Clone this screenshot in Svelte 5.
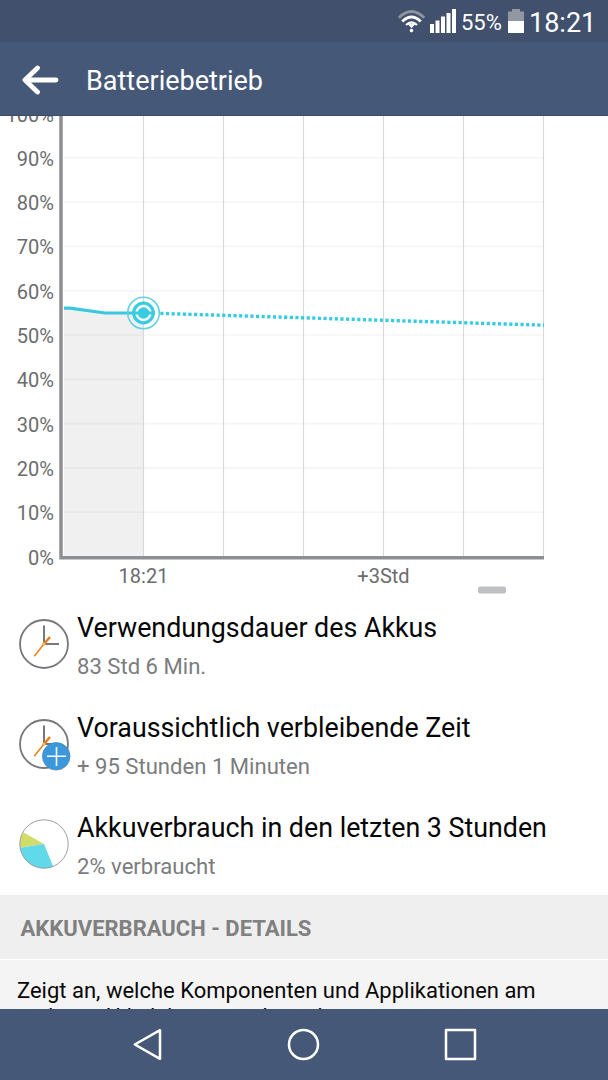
<script>
  const levels = [100, 90, 80, 70, 60, 50, 40, 30, 20, 10, 0];
  const columns = [143.5, 223.5, 303.5, 383.5, 463.5, 543.5];
  const gridY = (level) => 440.5 - level * 4.43;
  const items = [
    { icon: 'clock', title: 'Verwendungsdauer des Akkus', value: '83 Std 6 Min.' },
    { icon: 'plus', title: 'Voraussichtlich verbleibende Zeit', value: '+ 95 Stunden 1 Minuten' },
    { icon: 'pie', title: 'Akkuverbrauch in den letzten 3 Stunden', value: '2% verbraucht' }
  ];
</script>

<div class="screen">
  <div class="status">
    <svg class="wifi" width="28" height="24" viewBox="0 0 28 24" fill="none" stroke="#fff">
      <path d="M.8 8.8Q13.5 -3.6 26.2 8.8" stroke="#8e959f" stroke-width="2.8" />
      <path d="M4.2 12.6Q13.5 3.6 22.8 12.6" stroke-width="2.8" />
      <path d="M8 16Q13.5 10.8 19 16" stroke-width="2.2" />
      <path d="M8.8 14h3.6l1.1 1.4 1.1-1.4h3.6L13.5 19.2z" fill="#fff" stroke="none" />
      <circle cx="13.5" cy="21.6" r="1.8" fill="#fff" stroke="none" />
    </svg>
    <svg class="signal" width="26" height="24" viewBox="0 0 26 24" fill="#fff">
      <path d="M0 15h4v9H0zM5.5 11.5h4V24h-4zM11 7.5h4V24h-4zM16.5 4h4v20h-4zM22 0h4v24h-4z" />
    </svg>
    <span class="percent">55%</span>
    <svg class="battery" width="16" height="24" viewBox="0 0 16 24">
      <path d="M4 0h8v2.5h4V13H0V2.5h4z" fill="#9298a1" />
      <path d="M0 12h16v12H0z" fill="#fff" />
    </svg>
    <span class="time">18:21</span>
  </div>

  <header>
    <svg width="38" height="30" viewBox="0 0 38 30" fill="none" stroke="#fff" stroke-width="4.8" stroke-linecap="round" stroke-linejoin="round">
      <path d="M4 15H34M15.5 3L3 15L15.5 27" />
    </svg>
    <h1>Batteriebetrieb</h1>
  </header>

  <main>
    <svg class="chart" width="608" height="480" viewBox="0 0 608 480">
      <path d="M64 192.2L70 192.2L105 197H143.5V440H64z" fill="#f0f0f0" />
      {#each levels as level}
        {#if level > 0 && level < 100}
          <path d="M64 {gridY(level)}H543" stroke="#000" stroke-opacity="0.04" stroke-width="1.6" />
        {/if}
        <text class="level" x="54" y={gridY(level) + 8} text-anchor="end">{level}%</text>
      {/each}
      {#each columns as x}
        <path d="M{x} 0V440" stroke="#d8d8d9" stroke-width="1.1" />
      {/each}
      <path d="M61 0V441.8H544" fill="none" stroke="#8e8f92" stroke-width="3.5" />
      <path d="M64 192.2L70 192.2L105 197H143.5" fill="none" stroke="#39c8de" stroke-width="3.2" />
      <path d="M160.3 197.4L544 209.2" fill="none" stroke="#35cce0" stroke-width="3.4" stroke-dasharray="3.2 2.43" />
      <g fill="none" stroke="#39cbe1">
        <circle cx="143.5" cy="197" r="15.8" stroke-width="1.6" stroke="#62d2e3" />
        <circle cx="143.5" cy="197" r="9.8" fill="#fff" stroke-width="3.2" />
        <circle cx="143.5" cy="197" r="5.8" fill="#39cbe1" stroke="none" />
        <path d="M132 197h23" stroke-width="3" />
      </g>
      <text class="level" x="143.5" y="467" text-anchor="middle">18:21</text>
      <text class="level" x="383.5" y="467" text-anchor="middle">+3Std</text>
      <rect x="478" y="470.5" width="28" height="7" rx="2" fill="#bfc0c3" />
    </svg>

    <div class="items">
      {#each items as item}
        <section class="item">
          <svg class="icon" width="52" height="54" viewBox="0 0 52 54" fill="none">
            {#if item.icon === 'pie'}
              <circle cx="25" cy="26" r="24" fill="#fff" />
              <path d="M25 26L4.4 14.2A24 24 0 0 0 1.2 29.8z" fill="#d3dc69" />
              <path d="M25 26L1.2 29.8A24 24 0 0 0 34.2 48.4z" fill="#60d9eb" />
              <circle cx="25" cy="26" r="24.2" stroke="#929394" stroke-width="0.9" />
            {:else}
              <circle cx="25" cy="26" r="24" stroke="#77787a" stroke-width="1.8" />
              <path d="M25 7.5V26H40" stroke="#77787a" stroke-width="2" />
              <path d="M15.2 38.2L25 26" stroke="#e98114" stroke-width="1.5" />
              <path d="M25 26L31 19" stroke="#ea7911" stroke-width="2.4" />
              <circle cx="25" cy="26" r="1.3" fill="#ffe2a0" stroke="#ed8b20" stroke-width="0.7" />
              {#if item.icon === 'plus'}
                <circle cx="37.2" cy="38.3" r="13.8" fill="#3b98dc" stroke="#517fa4" stroke-width="0.7" />
                <path d="M28 38.3h19M37.5 29v19" stroke="#fff" stroke-width="1.6" />
              {/if}
            {/if}
          </svg>
          <div class="copy">
            <h2>{item.title}</h2>
            <p>{item.value}</p>
          </div>
        </section>
      {/each}
    </div>

    <h3>AKKUVERBRAUCH - DETAILS</h3>
    <div class="details">Zeigt an, welche Komponenten und Applikationen am<br />meisten Akkuleistung verbrauchen.</div>
  </main>

  <nav>
    <svg width="608" height="71" viewBox="0 0 608 71" fill="none" stroke="#fff" stroke-width="2.5" stroke-linejoin="round">
      <path d="M160 21.2V49.8L134.8 35.5z" />
      <circle cx="303.5" cy="35.5" r="14.5" />
      <path d="M446 21.1h29v29h-29z" />
    </svg>
  </nav>
</div>

<style>
  :global(body) { margin: 0; overflow: hidden; }
  .screen {
    display: flex;
    flex-direction: column;
    width: 608px;
    height: 1080px;
    overflow: hidden;
    background: #fff;
    font-family: Roboto, sans-serif;
  }
  h1, h2, h3, p { margin: 0; font-weight: 400; white-space: nowrap; }
  svg { display: block; flex: none; }
  .status {
    box-sizing: border-box;
    display: flex;
    flex: none;
    height: 42px;
    padding: 9px 0 0 398px;
    background: #41506d;
    color: #fff;
    white-space: nowrap;
  }
  .signal { margin-left: 4px; }
  .percent { width: 42px; margin-left: 5px; font-size: 22px; line-height: 28px; }
  .battery { margin-left: 5px; }
  .time { margin-left: 5px; font-size: 27px; line-height: 28px; }
  header {
    box-sizing: border-box;
    display: flex;
    align-items: center;
    flex: none;
    height: 74px;
    padding: 2px 0 0 22px;
    border-bottom: 1px solid #374a70;
    background: #465878;
    color: #fff;
  }
  h1 { margin-left: 26px; padding-top: 2px; font-size: 27px; line-height: 32px; }
  main { flex: 1; min-height: 0; overflow: hidden; }
  .level { font-size: 20px; fill: #6c6c6e; }
  .items { height: 299px; }
  .item { display: flex; height: 100px; }
  .icon { margin: 22px 0 0 19px; }
  .copy { margin-left: 6px; padding-top: 16px; }
  h2 { color: #060606; font-size: 26.8px; line-height: 32px; }
  p { margin-top: 8px; color: #7b7c7e; font-size: 22.1px; line-height: 28px; }
  h3 {
    box-sizing: border-box;
    height: 65px;
    padding-left: 20.5px;
    border-bottom: 1px solid #fff;
    background: #efefef;
    color: #808080;
    font-size: 22px;
    font-weight: 700;
    line-height: 67px;
  }
  .details {
    height: 80px;
    padding: 18px 0 0 17px;
    background: #f4f4f4;
    color: #080808;
    font-size: 22px;
    line-height: 26px;
    white-space: nowrap;
  }
  nav { flex: none; height: 71px; background: #465878; }
</style>
